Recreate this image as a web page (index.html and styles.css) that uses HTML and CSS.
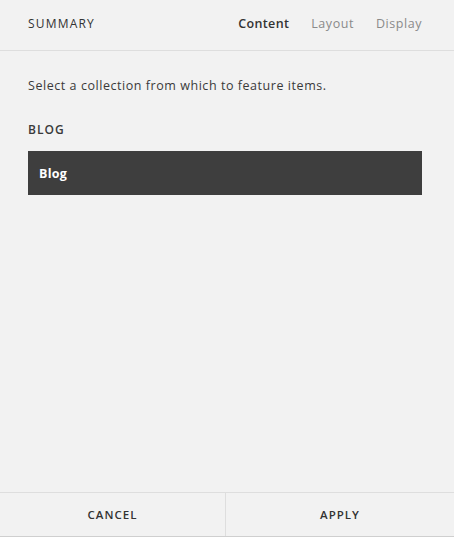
FILE: index.html
```html
<!DOCTYPE html>
<html>
<head>
<meta charset="utf-8">
<link rel="stylesheet" href="styles.css">
</head>
<body>
<div class="panel">
  <header class="header">
    <div class="title">SUMMARY</div>
    <nav class="tabs">
      <span class="tab active">Content</span>
      <span class="tab">Layout</span>
      <span class="tab">Display</span>
    </nav>
  </header>
  <main class="content">
    <p class="desc">Select a collection from which to feature items.</p>
    <div class="label">BLOG</div>
    <div class="option">Blog</div>
  </main>
  <footer class="footer">
    <div class="btn left">CANCEL</div>
    <div class="btn right">APPLY</div>
  </footer>
</div>
</body>
</html>
```
FILE: styles.css
```css
html, body {
  margin: 0;
  padding: 0;
  height: 100%;
}
body {
  background: #f2f2f2;
  font-family: "Open Sans", Lato, sans-serif;
  color: #333;
}
.panel {
  height: 537px;
  display: flex;
  flex-direction: column;
  box-sizing: border-box;
  border-bottom: 1px solid #cfcfcf;
}
.header {
  height: 51px;
  box-sizing: border-box;
  border-bottom: 1px solid #dedede;
  display: flex;
  align-items: center;
  justify-content: space-between;
  padding: 0 32px 4px 28px;
}
.title {
  font-size: 12px;
  letter-spacing: 1.2px;
  font-weight: 500;
  color: #333;
}
.tabs {
  display: flex;
  gap: 22px;
}
.tab {
  font-size: 12.5px;
  color: #8a8a8a;
  letter-spacing: 0.55px;
}
.tab.active {
  color: #333;
  font-weight: 600;
  letter-spacing: 0.35px;
}
.content {
  flex: 1;
  padding: 0 32px 0 28px;
}
.desc {
  margin: 26px 0 0;
  font-size: 12.5px;
  letter-spacing: 0.55px;
  color: #3a3a3a;
}
.label {
  margin-top: 27px;
  font-size: 12px;
  font-weight: 600;
  letter-spacing: 1px;
  color: #3a3a3a;
}
.option {
  margin-top: 13px;
  height: 44px;
  background: #3e3e3e;
  color: #fff;
  font-weight: 700;
  font-size: 12.5px;
  letter-spacing: 0.3px;
  display: flex;
  align-items: center;
  padding-left: 11px;
}
.footer {
  height: 44px;
  box-sizing: border-box;
  border-top: 1px solid #dedede;
  display: flex;
}
.btn {
  display: flex;
  align-items: center;
  justify-content: center;
  font-size: 11.5px;
  font-weight: 600;
  letter-spacing: 1px;
  color: #333;
}
.btn.left {
  width: 225px;
}
.btn.right {
  flex: 1;
  border-left: 1px solid #dedede;
}
```
